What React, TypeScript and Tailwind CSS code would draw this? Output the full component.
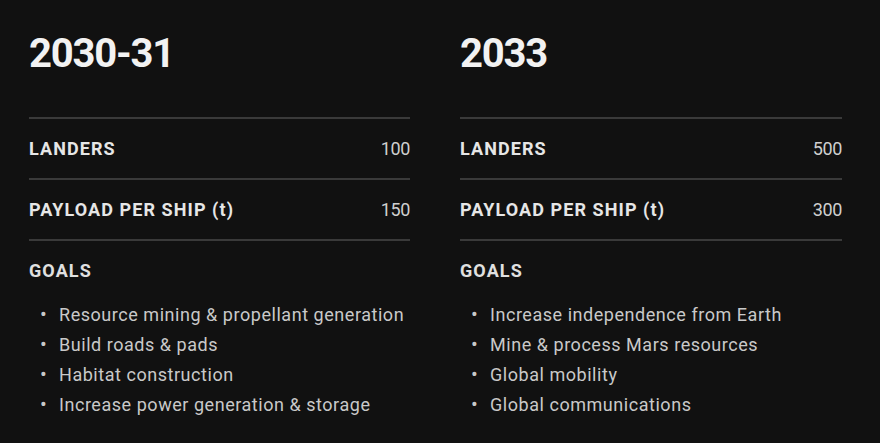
import React from 'react'

interface Column {
  year: string
  landers: string
  payload: string
  goals: string[]
}

const columns: Column[] = [
  {
    year: '2030-31',
    landers: '100',
    payload: '150',
    goals: [
      'Resource mining & propellant generation',
      'Build roads & pads',
      'Habitat construction',
      'Increase power generation & storage'
    ]
  },
  {
    year: '2033',
    landers: '500',
    payload: '300',
    goals: [
      'Increase independence from Earth',
      'Mine & process Mars resources',
      'Global mobility',
      'Global communications'
    ]
  }
]

const StatRow: React.FC<{ label: string; value: string }> = ({ label, value }) => (
  <div className="flex h-[61px] items-center justify-between border-b-2 border-[#3a3a3a]">
    <span className="text-[18px] font-bold tracking-[0.06em] text-[#e6e6e6]">{label}</span>
    <span className="text-[18px] tracking-[-0.02em] text-[#cfcfcf]">{value}</span>
  </div>
)

const Timeline: React.FC<{ col: Column }> = ({ col }) => (
  <div className="flex flex-col">
    <h2 className="h-[117px] pt-[28px] text-[40px] font-bold leading-[51px] tracking-[-0.03em] text-[#f2f2f2]">
      {col.year}
    </h2>
    <div className="border-t-2 border-[#3a3a3a]">
      <StatRow label="LANDERS" value={col.landers} />
      <StatRow label="PAYLOAD PER SHIP (t)" value={col.payload} />
    </div>
    <div className="pt-[19px] text-[18px] font-bold leading-[22px] tracking-[0.06em] text-[#e0e0e0]">GOALS</div>
    <ul className="mt-[17px] flex flex-col">
      {col.goals.map((goal) => (
        <li key={goal} className="flex h-[30px] items-center text-[18px] tracking-[0.03em] text-[#c9c9c9]">
          <span className="w-[30px] pl-[11px] text-[20px]">•</span>
          <span>{goal}</span>
        </li>
      ))}
    </ul>
  </div>
)

export default function App() {
  return (
    <div
      className="h-[443px] w-[880px] bg-[#111111]"
      style={{ fontFamily: 'Roboto, "Liberation Sans", sans-serif' }}
    >
      <div className="grid grid-cols-[381px_382px] gap-[50px] pl-[29px]">
        {columns.map((col) => (
          <Timeline key={col.year} col={col} />
        ))}
      </div>
    </div>
  )
}
